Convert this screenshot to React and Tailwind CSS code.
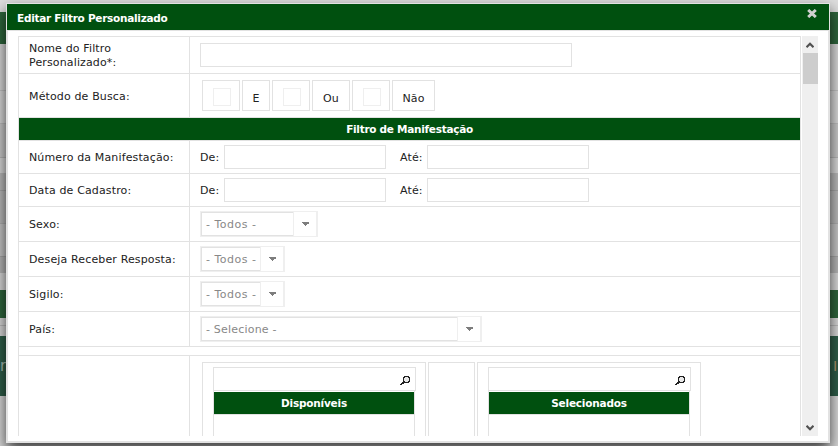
import React from 'react';

const band = {
  light: 'bg-[#dedede]',
  row: 'bg-[#dadada]',
  green: 'bg-[#2f673d]',
  teal: 'bg-[#2f5f4a]',
};

const BACKDROP = [
  ['h-3', band.light],
  ['h-8', band.green],
  ['h-[47px]', 'bg-[#dadada] border-b border-[#c4c4c4]'],
  ['h-[33px]', 'bg-[#dadada] border-b border-[#c0c0c0]'],
  ['h-[34px]', 'bg-[#cccccc] border-b border-[#b8b8b8]'],
  ['h-[15px]', band.row],
  ['h-[17px]', 'bg-[#bcbcbc]'],
  ['h-[33px]', 'bg-[#bcbcbc] border-t border-[#a8a8a8]'],
  ['h-[33px]', 'bg-[#c8c8c8] border-t border-[#b0b0b0]'],
  ['h-[17px]', 'bg-[#b8b8b8] border-t border-[#a8a8a8]'],
  ['h-[17px]', band.row],
  ['h-[28px]', band.green],
  ['h-[8px]', 'bg-[#dadada] border-b border-[#bdbdbd]'],
  ['h-[10px]', 'bg-[#dadada]'],
  ['h-[60px]', band.teal],
  ['h-[50px]', 'bg-[#dadada]'],
];

function Backdrop() {
  return (
    <div className="absolute inset-0 overflow-hidden">
      {BACKDROP.map(([h, c], i) => (
        <div key={i} className={`${h} ${c}`} />
      ))}
      <span className="absolute left-0 top-[357px] text-[15px] leading-[18px] text-[#a9bdb2]">r</span>
      <span className="absolute left-[833px] top-[357px] font-['Liberation_Sans',sans-serif] text-[15px] leading-[18px] text-[#b09a70]">I</span>
    </div>
  );
}

function Row({ label, height, children }) {
  return (
    <div className={`flex border-b border-[#e2e2e2] ${height}`}>
      <div className="flex w-[171px] shrink-0 items-center border-r border-[#e2e2e2] pl-[10px] pt-[2px]">
        <span className="whitespace-nowrap leading-[14px]">{label}</span>
      </div>
      <div className="flex flex-1 items-center pl-[10px]">{children}</div>
    </div>
  );
}

function Input({ width }) {
  return <input className={`h-6 border border-[#e2e2e2] bg-white outline-none ${width}`} />;
}

function Range() {
  return (
    <>
      <span className="w-6 pt-[2px]">De:</span>
      <Input width="w-[162px]" />
      <span className="ml-[14px] w-[27px] pt-[2px]">Até:</span>
      <Input width="w-[162px]" />
    </>
  );
}

function Select({ text, width, tracking }) {
  return (
    <div className={`flex h-[26px] border border-[#efefef] text-[#888] ${width}`}>
      <div className={`flex flex-1 items-center whitespace-nowrap border border-r-0 border-[#e2e2e2] pl-1 pt-[2px] ${tracking}`}>{text}</div>
      <div className="flex w-6 items-center justify-center border-l border-r border-[#efefef]">
        <svg width="7" height="4" viewBox="0 0 7 4" shapeRendering="crispEdges" fill="#7d7d7d">
          <path d="M0 0h7v1H0zM0.5 1h6v1h-6zM1 1h5v1H1zM2 2h3v1H2zM3 3h1v1H3z" />
        </svg>
      </div>
    </div>
  );
}

function Check() {
  return (
    <div className="flex h-[31px] w-[38px] justify-center border border-[#e2e2e2] pt-[7px]">
      <div className="mr-[-2px] size-[18px] border border-[#efefef]" />
    </div>
  );
}

function Option({ text, width }) {
  return (
    <div className={`flex h-[31px] items-center justify-center border border-[#e2e2e2] pt-[8px] ${width}`}>{text}</div>
  );
}

function SearchIcon() {
  return (
    <svg width="10" height="9" viewBox="0 0 10 9" shapeRendering="crispEdges" fill="#222">
      <path d="M4 1h5v5H4z" fill="#e8e8e8" />
      <path d="M4 0h5v1H4zM3 1h2v1H3zM3 2h1v4H3zM8 1h2v1H8zM9 2h1v4H9zM2 6h7v1H2zM3 5h2v1H3zM1 7h3v1H1zM0 8h2v1H0zM8 5h2v1H8z" />
    </svg>
  );
}

function PickList({ title }) {
  return (
    <div className="h-[90px] w-[224px] border border-[#e2e2e2] pl-[10px] pt-1">
      <div className="flex h-6 w-[203px] items-center justify-end border border-[#e2e2e2] pr-[5px] pt-[3px]">
        <SearchIcon />
      </div>
      <div className="w-[202px] border-x border-[#e2e2e2] pt-px">
        <div className="flex h-[22px] items-center justify-center bg-[#00500f] pt-[2px] text-[10.5px] font-bold tracking-[-0.2px] text-white">
          <span>{title}</span>
        </div>
        <div className="h-10 border-t border-[#e2e2e2]" />
      </div>
    </div>
  );
}

function Scrollbar() {
  return (
    <div className="ml-px flex w-4 flex-col items-center bg-[#efefef]">
      <div className="flex h-[17px] items-center">
        <svg width="8" height="6" viewBox="0 0 8 6" fill="none" stroke="#505050" strokeWidth="2.2">
          <path d="M0.5 5.2L4 1.8L7.5 5.2" />
        </svg>
      </div>
      <div className="h-[31px] w-[15px] bg-[#cdcdcd]" />
      <div className="flex-1" />
      <div className="flex h-[17px] items-center">
        <svg width="8" height="6" viewBox="0 0 8 6" fill="none" stroke="#505050" strokeWidth="2.2">
          <path d="M0.5 0.8L4 4.2L7.5 0.8" />
        </svg>
      </div>
    </div>
  );
}

export default function App() {
  return (
    <div className="relative h-[446px] w-[838px] overflow-hidden bg-[#cccccc] pl-[6px] pt-[3px] font-['Verdana','DejaVu_Sans',sans-serif] text-[11px] tracking-[0.14px] text-[#222]">
      <Backdrop />
      <div className="relative flex h-[440px] w-[824px] flex-col border border-[#e2e2e2] bg-white shadow-[0_7px_14px_0_rgba(0,0,0,0.75)]">
        <div className="flex h-[27px] shrink-0 justify-between border-b border-[#e2e2e2] bg-[#00500f] pl-[10px] pr-[12px]">
          <span className="pt-[7px] text-[10.5px] font-bold leading-[14px] tracking-[-0.27px] text-white">Editar Filtro Personalizado</span>
          <svg className="mt-[5px]" width="10" height="9" viewBox="0 0 10 9" stroke="#d0d0d0" strokeWidth="3">
            <path d="M1.2 1L8.8 8M8.8 1L1.2 8" />
          </svg>
        </div>
        <div className="flex flex-1 border-x border-b border-[#e2e2e2] pl-[10px] pt-[5px]">
          <div className="flex h-[400px] overflow-hidden">
            <div className="w-[783px] border-x border-t border-[#e2e2e2]">
              <Row height="h-[37px]" label={<>Nome do Filtro<br />Personalizado*:</>}>
                <Input width="w-[372px]" />
              </Row>
              <Row height="h-[44px]" label="Método de Busca:">
                <div className="ml-[2px] flex gap-[2px]">
                  <Check />
                  <Option text="E" width="w-[28px]" />
                  <Check />
                  <Option text="Ou" width="w-[38px]" />
                  <Check />
                  <Option text="Não" width="w-[43px]" />
                </div>
              </Row>
              <div className="flex h-[23px] items-center justify-center border-b border-[#e2e2e2] bg-[#00500f] pt-[2px] text-[10.5px] font-bold tracking-[-0.28px] text-white">
                Filtro de Manifestação
              </div>
              <Row height="h-[33px]" label="Número da Manifestação:"><Range /></Row>
              <Row height="h-[33px]" label="Data de Cadastro:"><Range /></Row>
              <Row height="h-[35px]" label="Sexo:"><Select text="- Todos -" width="w-[118px]" tracking="tracking-[0.5px]" /></Row>
              <Row height="h-[35px]" label="Deseja Receber Resposta:"><Select text="- Todos -" width="w-[85px]" tracking="tracking-[0.5px]" /></Row>
              <Row height="h-[35px]" label="Sigilo:"><Select text="- Todos -" width="w-[85px]" tracking="tracking-[0.5px]" /></Row>
              <Row height="h-[35px]" label="País:"><Select text="- Selecione -" width="w-[282px]" tracking="tracking-[0.2px]" /></Row>
              <div className="h-[9px] border-b border-[#e2e2e2]" />
              <Row height="h-[103px]" label="">
                <div className="ml-[2px] flex gap-[2px]">
                  <PickList title="Disponíveis" />
                  <div className="h-[90px] w-[47px] border border-[#e2e2e2]" />
                  <PickList title="Selecionados" />
                </div>
              </Row>
            </div>
            <Scrollbar />
          </div>
        </div>
      </div>
    </div>
  );
}
